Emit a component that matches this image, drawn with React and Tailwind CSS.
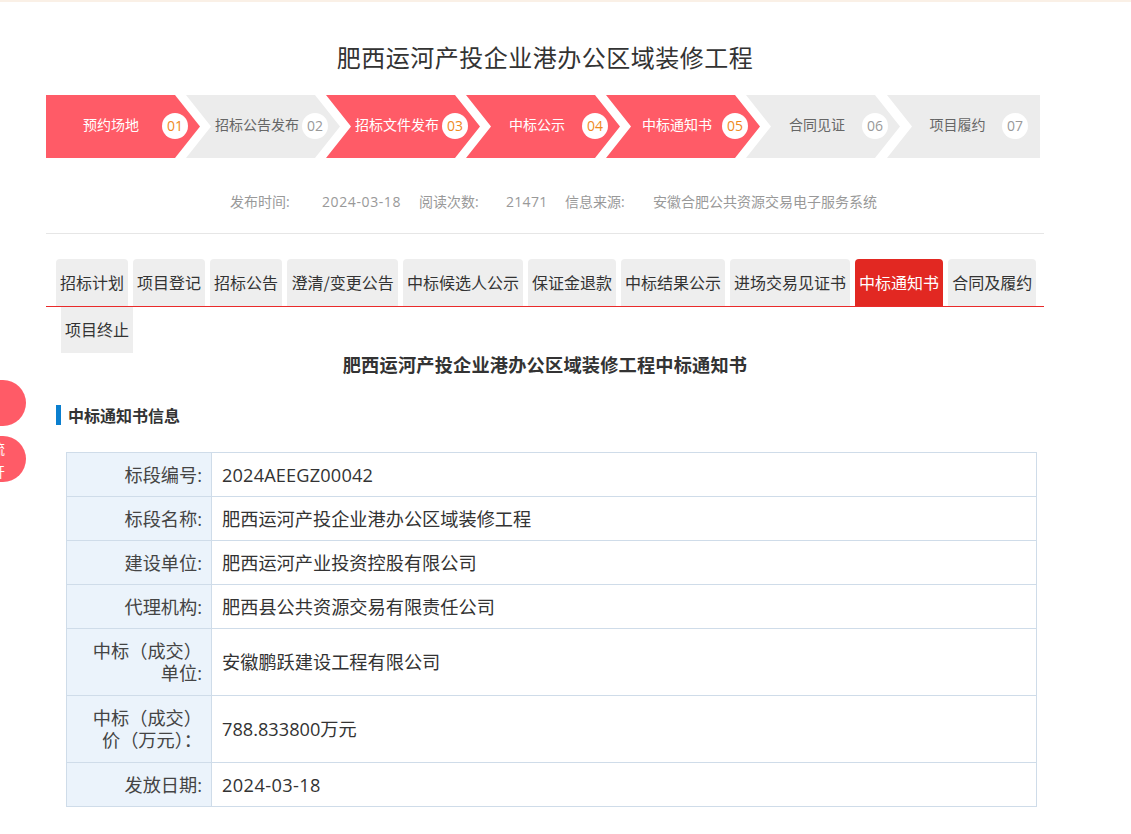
const sans = "font-['Open_Sans','Noto_Sans_CJK_SC','Liberation_Sans',sans-serif]";
const cjk = "font-['Noto_Sans_CJK_SC','Liberation_Sans',sans-serif]";
const song = "font-['Liberation_Serif','Noto_Sans_CJK_SC',serif]";

const steps = [
  { name: "预约场地", num: "01", on: true, first: true },
  { name: "招标公告发布", num: "02" },
  { name: "招标文件发布", num: "03", on: true },
  { name: "中标公示", num: "04", on: true },
  { name: "中标通知书", num: "05", on: true },
  { name: "合同见证", num: "06" },
  { name: "项目履约", num: "07", last: true },
];

const tabs = ["招标计划", "项目登记", "招标公告", "澄清/变更公告", "中标候选人公示", "保证金退款", "中标结果公示", "进场交易见证书", "中标通知书", "合同及履约"];

const rows = [
  { label: "标段编号:", value: "2024AEEGZ00042", track: "tracking-[0.15px]" },
  { label: "标段名称:", value: "肥西运河产投企业港办公区域装修工程" },
  { label: "建设单位:", value: "肥西运河产业投资控股有限公司" },
  { label: "代理机构:", value: "肥西县公共资源交易有限责任公司" },
  { label: "中标（成交）单位:", value: "安徽鹏跃建设工程有限公司", tall: true },
  { label: "中标（成交）价（万元）：", value: "788.833800万元", tall: true },
  { label: "发放日期:", value: "2024-03-18", track: "tracking-[0.4px]" },
];

function Step({ step }) {
  let shape = "[clip-path:polygon(0_0,calc(100%-25px)_0,100%_50%,calc(100%-25px)_100%,0_100%,25px_50%)]";
  if (step.first) shape = "[clip-path:polygon(0_0,calc(100%-25px)_0,100%_50%,calc(100%-25px)_100%,0_100%)]";
  if (step.last) shape = "[clip-path:polygon(0_0,100%_0,100%_100%,0_100%,25px_50%)]";
  return (
    <div
      className={`${shape} ${step.first ? "pl-[14px]" : "pl-[26px]"} ${step.first ? "" : step.last ? "-ml-[13px]" : "-ml-[14px]"} ${step.last ? "w-[153px]" : "w-[154px]"} ${step.on ? "bg-[#ff5b67] text-white" : "bg-[#ececec] text-[#666]"} h-full flex items-center pr-[12px] pb-[2px]`}
    >
      <div className={`${cjk} flex-1 text-center text-[14px] whitespace-nowrap pb-[2px]`}>{step.name}</div>
      <div className={`${step.on ? "text-[#f08a1d]" : "text-[#999]"} w-[26px] h-[26px] rounded-full bg-white flex items-center justify-center text-[14px] shrink-0`}>
        {step.num}
      </div>
    </div>
  );
}

function App() {
  return (
    <div className={`${sans} relative w-full h-[834px] bg-white overflow-hidden`}>
      <div className="h-[2px] bg-[#faf0e6]"></div>

      <div className="w-[998px] ml-[46px]">
        <h1 className={`${song} text-[24px] leading-[32px] mt-[41px] text-center text-[#333] tracking-[0.5px]`}>
          肥西运河产投企业港办公区域装修工程
        </h1>

        <div className="flex w-[994px] h-[63px] mt-[20px]">
          {steps.map((s) => (
            <Step key={s.num} step={s} />
          ))}
        </div>

        <div className="flex h-[76px] items-center border-b border-[#e6e6e6] pl-[184px] pt-[12px] text-[14px] text-[#999]">
          <span className="w-[92px]">发布时间:</span>
          <span className="w-[97px] tracking-[0.6px]">2024-03-18</span>
          <span className="w-[87px]">阅读次数:</span>
          <span className="w-[59px] tracking-[0.3px]">21471</span>
          <span className="w-[88px]">信息来源:</span>
          <span>安徽合肥公共资源交易电子服务系统</span>
        </div>

        <div className="flex gap-[5px] pl-[10px] mt-[25px] border-b border-[#e92a2a] h-[48px]">
          {tabs.map((t) => (
            <div
              key={t}
              className={`${t === "中标通知书" ? "bg-[#e22822] text-white" : "bg-[#eee] text-[#333]"} ${t === "澄清/变更公告" ? "min-w-[111px]" : ""} ${cjk} h-[47px] px-[4px] pb-[2px] rounded-t-[4px] flex items-center justify-center text-[16px] whitespace-nowrap`}
            >
              {t}
            </div>
          ))}
        </div>
        <div className={`${cjk} ml-[15px] w-[72px] h-[46px] pb-[2px] bg-[#eee] text-[#333] flex items-center justify-center text-[16px]`}>
          项目终止
        </div>

        <h2 className={`${song} text-center text-[18.2px] tracking-[0.2px] leading-[24px] font-bold text-[#333] mt-[1px]`}>
          肥西运河产投企业港办公区域装修工程中标通知书
        </h2>

        <div className={`${cjk} ml-[10px] mt-[27px] h-[20px] border-l-[5px] border-[#0a7fcf] pl-[7px] flex items-center text-[16px] font-bold text-[#333]`}>
          中标通知书信息
        </div>

        <table className="ml-[20px] mt-[27px] w-[971px] border-collapse table-fixed text-[18.2px] leading-[22px]">
          <tbody>
            {rows.map((r) => (
              <tr key={r.label} className={r.tall ? "h-[67px]" : "h-[44px]"}>
                <td className="w-[145px] border border-[#cfdce9] bg-[#ebf3fb] text-right pr-[9px] pl-[10px] text-[#444]">{r.label}</td>
                <td className={`${r.track || ""} border border-[#cfdce9] pl-[10px] text-[#333]`}>{r.value}</td>
              </tr>
            ))}
          </tbody>
        </table>
      </div>

      <div className="absolute left-0 top-[380px] w-[26px] h-[46px] bg-[#ff5b67] rounded-r-full"></div>
      <div className="absolute left-0 top-[436px] w-[26px] h-[46px] pt-[1px] bg-[#ff5b67] rounded-r-full overflow-hidden text-white text-[14px] leading-[23px]">
        <div className="-ml-[9px]">流</div>
        <div className="-ml-[9px]">开</div>
      </div>
    </div>
  );
}

export default App;
